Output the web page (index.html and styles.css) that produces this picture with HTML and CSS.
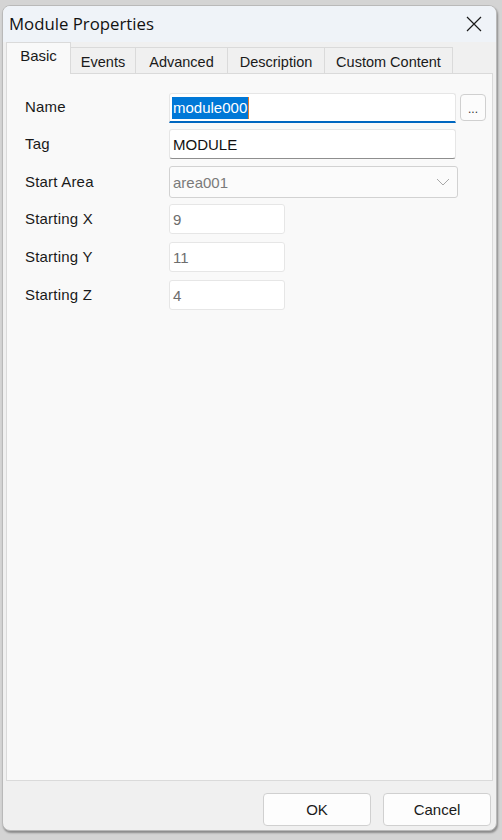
FILE: index.html
```html
<!DOCTYPE html>
<html>
<head>
<meta charset="utf-8">
<link rel="stylesheet" href="styles.css">
</head>
<body>
<div class="window">
  <div class="titlebar">
    <span class="title">Module Properties</span>
    <svg class="close" width="16" height="16" viewBox="0 0 16 16"><path d="M1 1 L15 15 M15 1 L1 15" stroke="#1a1a1a" stroke-width="1.2" fill="none"/></svg>
  </div>
  <div class="content">
    <div class="tabs">
      <div class="tab active">Basic</div>
      <div class="tab">Events</div>
      <div class="tab">Advanced</div>
      <div class="tab">Description</div>
      <div class="tab">Custom Content</div>
    </div>
    <div class="panel">
      <div class="row r-name">
        <div class="label">Name</div>
        <div class="field field-name"><span class="sel">module000</span><span class="caret"></span></div>
        <div class="ellipsis">...</div>
      </div>
      <div class="row r-tag">
        <div class="label">Tag</div>
        <div class="field field-tag">MODULE</div>
      </div>
      <div class="row r-area">
        <div class="label">Start Area</div>
        <div class="field combo"><span>area001</span>
          <svg width="14" height="8" viewBox="0 0 14 8"><path d="M1 1 L7 7 L13 1" stroke="#a8a8a8" stroke-width="1" fill="none"/></svg>
        </div>
      </div>
      <div class="row r-num">
        <div class="label">Starting X</div>
        <div class="field num">9</div>
      </div>
      <div class="row r-num">
        <div class="label">Starting Y</div>
        <div class="field num">11</div>
      </div>
      <div class="row r-num">
        <div class="label">Starting Z</div>
        <div class="field num">4</div>
      </div>
    </div>
    <div class="footer">
      <div class="btn">OK</div>
      <div class="btn">Cancel</div>
    </div>
  </div>
</div>
</body>
</html>
```
FILE: styles.css
```css
html, body {
  margin: 0;
  padding: 0;
}
body {
  background: #d4d4d4;
  width: 502px;
  height: 840px;
  padding: 5px 0 0 2px;
  box-sizing: border-box;
  font-family: "Liberation Sans", Arial, sans-serif;
  color: #1a1a1a;
}
.window {
  width: 495px;
  height: 826px;
  border-radius: 8px;
  background: #f0f0f0;
  border: 1px solid #b9b9b9;
  box-sizing: border-box;
  overflow: hidden;
  display: flex;
  flex-direction: column;
  box-shadow: 1px 2px 2px rgba(0,0,0,0.35);
}
.titlebar {
  height: 36px;
  flex: none;
  background: #eff3f8;
  display: flex;
  align-items: center;
  justify-content: space-between;
  padding: 0 14px 0 6px;
}
.title {
  font-family: "Open Sans", "Noto Sans", sans-serif;
  font-size: 16.8px;
  color: #111;
  margin-top: -2px;
}
.close {
  display: block;
}
.content {
  flex: 1;
  display: flex;
  flex-direction: column;
  padding: 0 3px 0 3px;
}
.tabs {
  display: flex;
  height: 31px;
  align-items: flex-end;
  flex: none;
  position: relative;
  z-index: 1;
}
.tab {
  height: 26px;
  border: 1px solid #dadada;
  border-bottom: none;
  background: #f0f0f0;
  font-size: 14.5px;
  color: #1a1a1a;
  box-sizing: border-box;
  display: flex;
  align-items: center;
  justify-content: center;
  margin-left: -1px;
  padding-top: 2px;
}
.tab:nth-child(2) { width: 66px; }
.tab:nth-child(3) { width: 93px; }
.tab:nth-child(4) { width: 98px; }
.tab:nth-child(5) { width: 129px; }
.tab.active {
  margin-left: 0;
  width: 65px;
  background: #f9f9f9;
  padding-top: 0;
  padding-bottom: 7px;
  margin-bottom: -1px;
  height: 32px;
  border-right: 1px solid #dadada;
  font-size: 15px;
}
.panel {
  height: 708px;
  flex: none;
  background: #f9f9f9;
  border: 1px solid #dadada;
  box-sizing: border-box;
  padding: 19px 0 0 18px;
  display: flex;
  flex-direction: column;
}
.row {
  display: flex;
  align-items: center;
}
.label {
  width: 144px;
  flex: none;
  font-size: 15px;
  color: #1a1a1a;
  letter-spacing: 0.2px;
  margin-top: -2px;
}
.field {
  box-sizing: border-box;
  background: #fff;
  border: 1px solid #e6e6e6;
  border-radius: 3px;
  font-size: 15px;
  display: flex;
  align-items: center;
  padding-left: 3px;
}
.r-name { height: 30px; }
.r-name .label { margin-top: -4px; }
.field-name {
  width: 287px;
  height: 30px;
  border-bottom: 2px solid #0067c0;
  border-radius: 3px 3px 0 0;
  padding-left: 2px;
}
.sel {
  background: #0078d7;
  color: #fff;
  line-height: 22px;
  padding: 0 1px;
}
.caret {
  width: 1px;
  height: 22px;
  background: #e07b2a;
}
.ellipsis {
  width: 26px;
  height: 27px;
  box-sizing: border-box;
  margin-left: 4px;
  margin-top: -1px;
  border: 1px solid #d0d0d0;
  border-radius: 4px;
  background: #fcfcfc;
  font-size: 12px;
  display: flex;
  justify-content: center;
  align-items: flex-end;
  padding-bottom: 5px;
  line-height: 1;
  color: #333;
}
.r-tag { margin-top: 6px; }
.field-tag {
  width: 287px;
  height: 30px;
  border-bottom: 1px solid #8e8e8e;
  color: #111;
  padding-left: 3px;
}
.r-area { margin-top: 7px; }
.combo {
  width: 289px;
  height: 32px;
  border-color: #d2d2d2;
  color: #7a7a7a;
  justify-content: space-between;
  padding-right: 7px;
  background: #fbfbfb;
}
.r-num { margin-top: 6px; }
.num {
  width: 116px;
  height: 30px;
  color: #6d6d6d;
  padding-left: 3px;
}
.r-num + .r-num { margin-top: 8px; }
.footer {
  flex: 1;
  display: flex;
  justify-content: flex-end;
  align-items: flex-start;
  padding: 12px 2px 0 0;
  gap: 12px;
}
.btn {
  width: 108px;
  height: 33px;
  box-sizing: border-box;
  border: 1px solid #d0d0d0;
  border-radius: 4px;
  background: #fdfdfd;
  font-size: 15px;
  display: flex;
  align-items: center;
  justify-content: center;
  color: #1a1a1a;
}
```
